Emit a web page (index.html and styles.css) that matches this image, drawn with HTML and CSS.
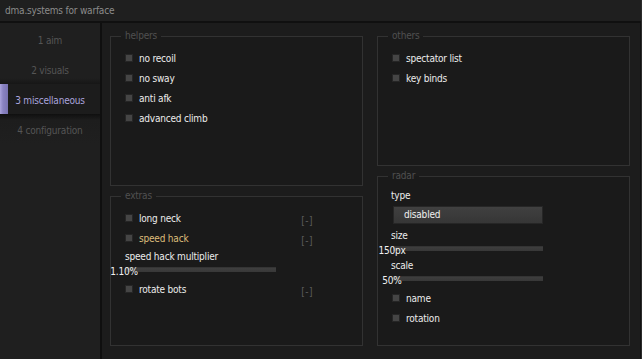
FILE: index.html
```html
<!DOCTYPE html>
<html lang="en">
<head>
<meta charset="utf-8">
<title>dma.systems for warface</title>
<link rel="stylesheet" href="styles.css">
</head>
<body>
<div class="window">
  <header class="titlebar">dma.systems for warface</header>
  <div class="frame">
    <nav class="sidebar">
      <div class="tab">1 aim</div>
      <div class="tab tab--pre">2 visuals</div>
      <div class="tab tab--active">3 miscellaneous</div>
      <div class="tab tab--post">4 configuration</div>
    </nav>
    <main class="content">
      <div class="column">
        <section class="group group--tall">
          <span class="group-title">helpers</span>
          <div class="group-body">
            <div class="check-row"><span class="box"></span><span class="label">no recoil</span></div>
            <div class="check-row"><span class="box"></span><span class="label">no sway</span></div>
            <div class="check-row"><span class="box"></span><span class="label">anti afk</span></div>
            <div class="check-row"><span class="box"></span><span class="label">advanced climb</span></div>
          </div>
        </section>
        <section class="group group--tall">
          <span class="group-title">extras</span>
          <div class="group-body">
            <div class="check-row"><span class="box"></span><span class="label">long neck</span><span class="bind">[-]</span></div>
            <div class="check-row"><span class="box"></span><span class="label label--hot">speed hack</span><span class="bind">[-]</span></div>
            <div class="slider slider--extras">
              <div class="field-label">speed hack multiplier</div>
              <div class="track track--wide"><span class="track-value">1.10%</span></div>
            </div>
            <div class="check-row check-row--after-slider"><span class="box"></span><span class="label">rotate bots</span><span class="bind">[-]</span></div>
          </div>
        </section>
      </div>
      <div class="column">
        <section class="group group--short">
          <span class="group-title">others</span>
          <div class="group-body">
            <div class="check-row"><span class="box"></span><span class="label">spectator list</span></div>
            <div class="check-row"><span class="box"></span><span class="label">key binds</span></div>
          </div>
        </section>
        <section class="group group--radar">
          <span class="group-title">radar</span>
          <div class="group-body group-body--radar">
            <div class="field-label">type</div>
            <div class="combo">disabled</div>
            <div class="field-label field-label--size">size</div>
            <div class="track track--radar"><span class="track-value">150px</span></div>
            <div class="field-label field-label--scale">scale</div>
            <div class="track track--radar"><span class="track-value">50%</span></div>
            <div class="check-row check-row--radar-first"><span class="box"></span><span class="label">name</span></div>
            <div class="check-row"><span class="box"></span><span class="label">rotation</span></div>
          </div>
        </section>
      </div>
    </main>
  </div>
</div>
</body>
</html>
```

FILE: styles.css
```css
* { box-sizing: border-box; }

html, body {
  margin: 0;
  padding: 0;
  background: #1c1c1c;
}

body {
  font-family: "DejaVu Sans Condensed", "DejaVu Sans", sans-serif;
  font-stretch: condensed;
  font-size: 10px;
  letter-spacing: -0.2px;
  color: #e4e4e4;
}

.window {
  width: 642px;
  height: 359px;
  display: flex;
  flex-direction: column;
  border-right: 1px solid #2c2c2c;
  background: #1c1c1c;
  overflow: hidden;
}

.titlebar {
  height: 23px;
  line-height: 21px;
  padding-left: 5px;
  background: #1f1f1f;
  border-bottom: 2px solid #101010;
  color: #8c8c8c;
  flex: none;
}

.frame {
  flex: 1;
  display: flex;
  min-height: 0;
}

.sidebar {
  width: 102px;
  flex: none;
  padding-top: 1px;
  background: #1f1f1f;
  border-right: 2px solid #0f0f0f;
  display: flex;
  flex-direction: column;
}

.tab {
  height: 30px;
  padding-top: 3px;
  line-height: 27px;
  text-align: center;
  color: #555555;
  background: #1f1f1f;
}

.tab--pre {
  background: linear-gradient(to bottom, #1f1f1f 0, #1f1f1f 24px, #161616 30px);
}

.tab--active {
  color: #aaa4dc;
  background:
    linear-gradient(to right, #aaa3dc 0, #8a83c2 3px, #7a73b2 8px, transparent 8px),
    #1c1c1c;
}

.tab--post {
  background: linear-gradient(to bottom, #0f0f0f 0, #141414 2px, #1d1d1d 6px, #1f1f1f 30px);
}

.content {
  flex: 1;
  display: flex;
  gap: 14px;
  padding: 13px 0 0 8px;
  background: #1c1c1c;
  border-right: 1px solid #121212;
}

.column {
  width: 253px;
  display: flex;
  flex-direction: column;
  gap: 10px;
}

.group {
  position: relative;
  border: 1px solid #323232;
  background: #1a1a1a;
}

.group--tall { height: 150px; }
.group--short { height: 130px; }
.group--radar { height: 170px; }

.group-title {
  position: absolute;
  top: -7px;
  left: 10px;
  padding: 0 4px;
  line-height: 12px;
  color: #505050;
  background: linear-gradient(to bottom, #1c1c1c 50%, #1a1a1a 50%);
}

.group-body {
  padding: 11px 0 0 15px;
}

.check-row {
  display: flex;
  align-items: center;
  height: 20px;
  gap: 7px;
}

.box {
  width: 6px;
  height: 6px;
  flex: none;
  background: #454545;
  box-shadow: 0 0 0 1px #262626;
}

.label {
  flex: 1;
  color: #ececec;
}

.label--hot {
  color: #ddbd7a;
}

.bind {
  margin-right: 49px;
  margin-top: 4px;
  letter-spacing: 0.5px;
  color: #5c5c5c;
}

.field-label {
  line-height: 12px;
  color: #ececec;
}

.slider--extras {
  margin-left: -1px;
  padding-top: 3px;
}

.track {
  position: relative;
  height: 5px;
  margin-top: 4px;
  background: linear-gradient(to bottom, #2a2a2a 0, #3e3e3e 1px, #383838 5px);
}

.track--wide { width: 151px; }

.track--radar {
  width: 150px;
  margin-left: 2px;
}

.track-value {
  position: absolute;
  left: -1px;
  top: 100%;
  transform: translate(-50%, -50%);
  line-height: 12px;
  color: #f0f0f0;
  white-space: nowrap;
}

.check-row--after-slider {
  margin-top: 7px;
}

.group-body--radar {
  padding: 13px 0 0 13px;
}

.combo {
  width: 150px;
  height: 18px;
  margin: 4px 0 0 2px;
  padding-left: 10px;
  line-height: 16px;
  border: 1px solid #262626;
  background: linear-gradient(to bottom, #404040, #363636);
  color: #f0f0f0;
}

.field-label--size { margin-top: 6px; }
.field-label--scale { margin-top: 9px; }

.group-body--radar .check-row {
  padding-left: 2px;
}

.check-row--radar-first {
  margin-top: 7px;
}
```
